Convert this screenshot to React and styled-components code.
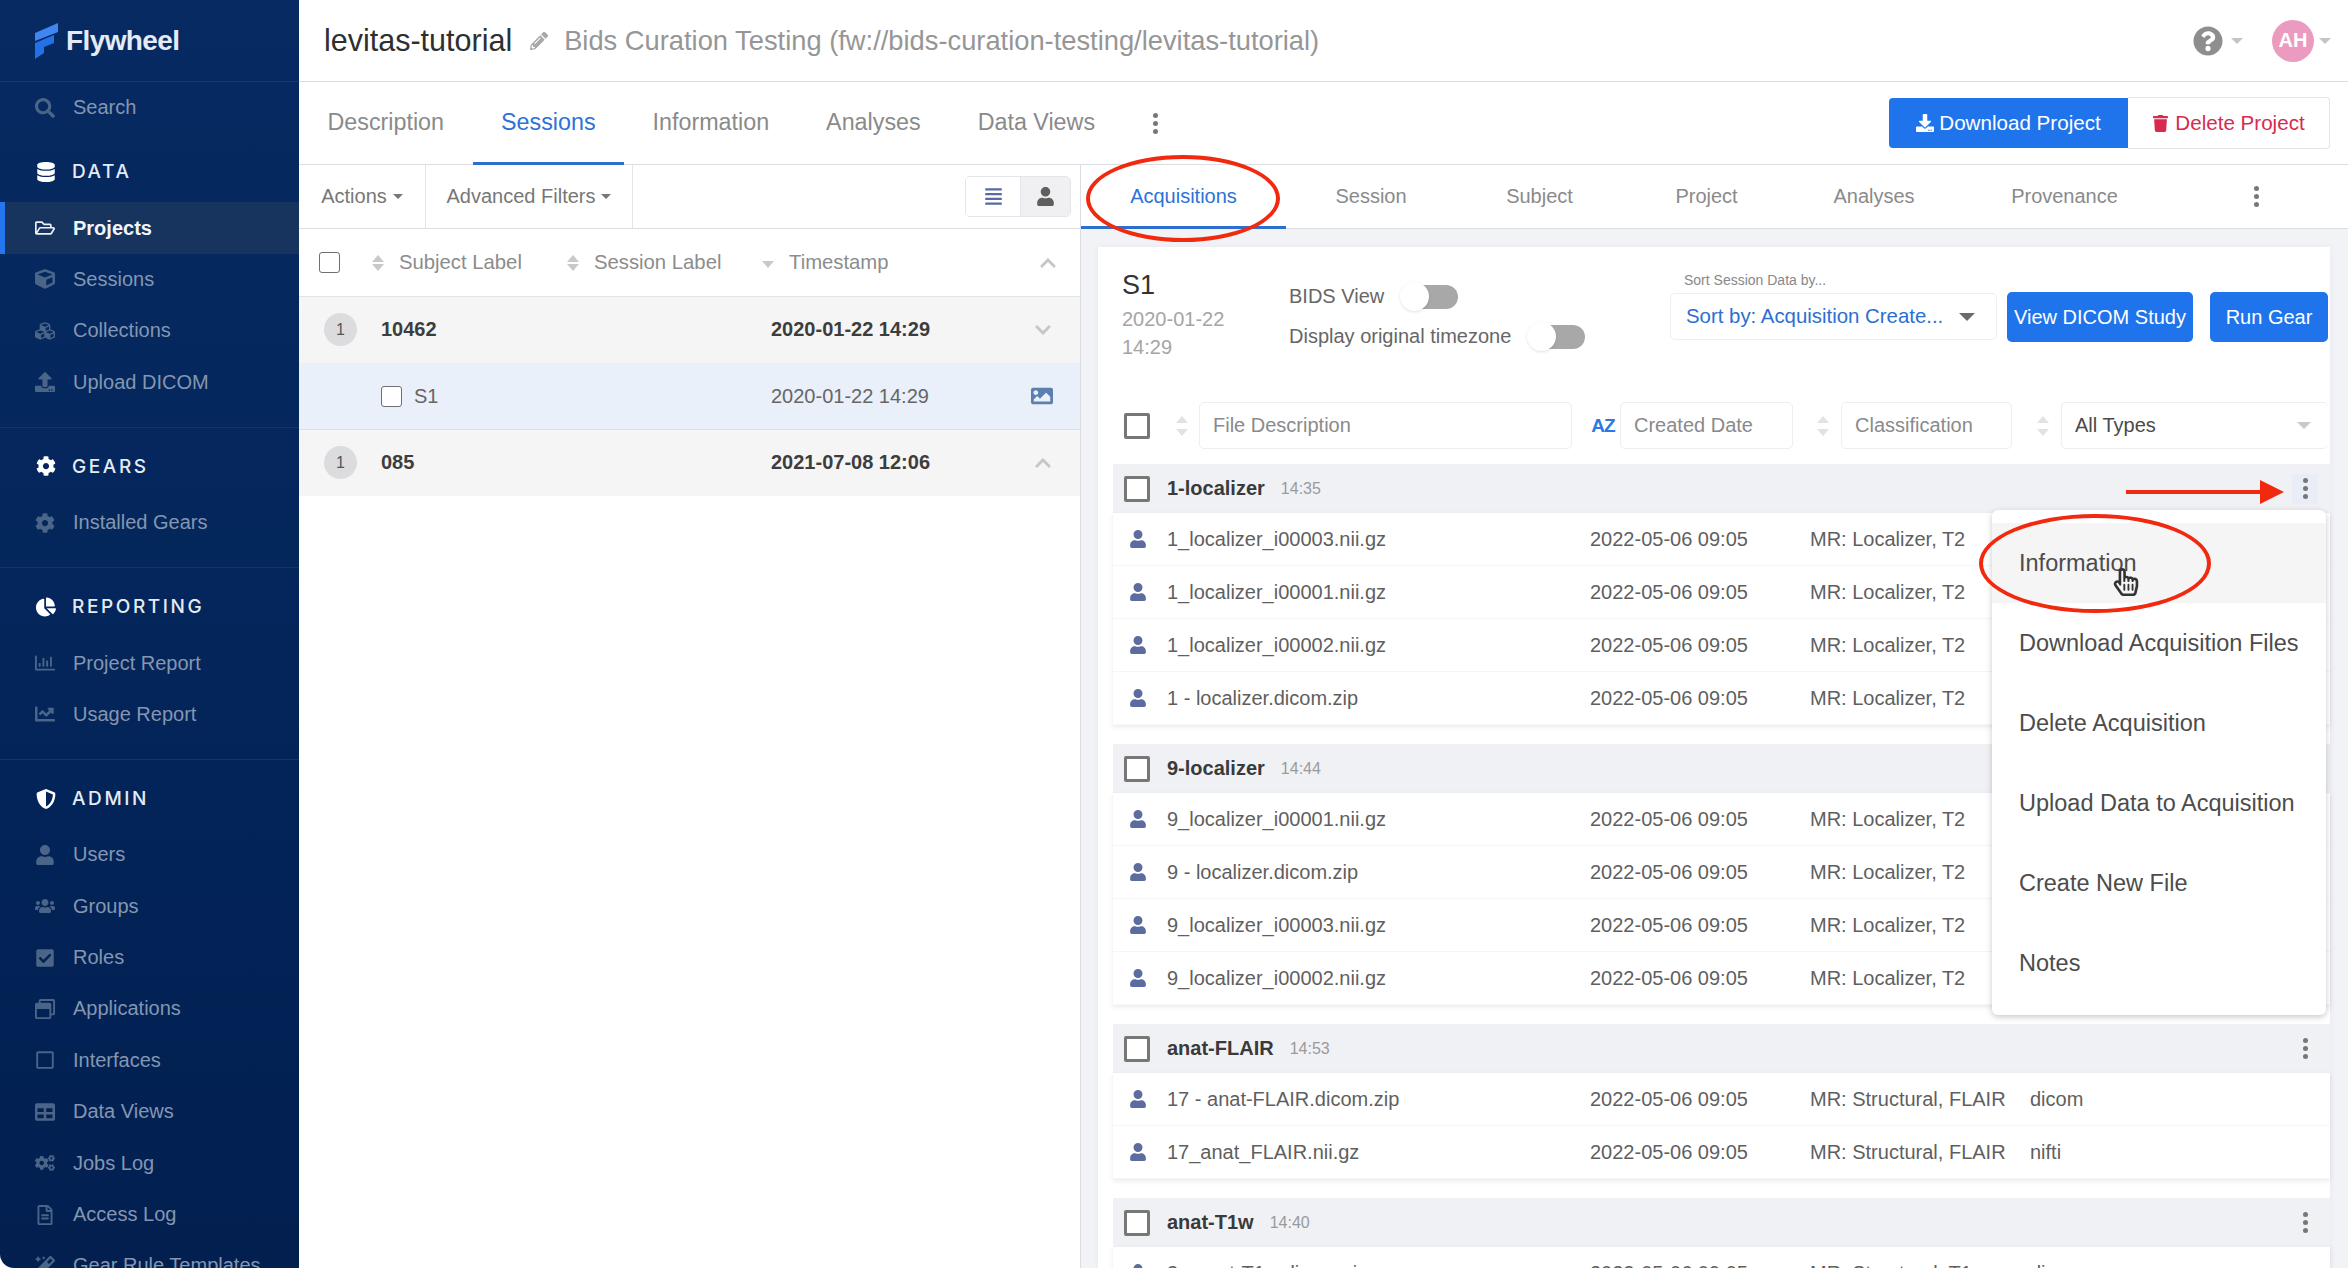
import styled, { createGlobalStyle } from "styled-components";
import {
  FaSearch, FaDatabase, FaRegFolderOpen, FaCube, FaCubes, FaUpload, FaCog, FaChartPie,
  FaShieldAlt, FaUser, FaUsers, FaCheckSquare, FaRegWindowRestore, FaRegSquare, FaTable,
  FaCogs, FaRegFileAlt, FaRegChartBar, FaChartLine, FaMagic, FaPencilAlt, FaDownload,
  FaTrash, FaQuestionCircle, FaImage, FaAlignJustify, FaChevronUp, FaChevronDown, FaRegHandPointer,
} from "react-icons/fa";

const SECTIONS = [
  {
    title: "DATA", icon: <FaDatabase />,
    items: [
      { label: "Projects", icon: <FaRegFolderOpen />, active: true },
      { label: "Sessions", icon: <FaCube /> },
      { label: "Collections", icon: <FaCubes /> },
      { label: "Upload DICOM", icon: <FaUpload /> },
    ],
  },
  { title: "GEARS", icon: <FaCog />, items: [{ label: "Installed Gears", icon: <FaCog /> }] },
  {
    title: "REPORTING", icon: <FaChartPie />,
    items: [
      { label: "Project Report", icon: <FaRegChartBar /> },
      { label: "Usage Report", icon: <FaChartLine /> },
    ],
  },
  {
    title: "ADMIN", icon: <FaShieldAlt />,
    items: [
      { label: "Users", icon: <FaUser /> },
      { label: "Groups", icon: <FaUsers /> },
      { label: "Roles", icon: <FaCheckSquare /> },
      { label: "Applications", icon: <FaRegWindowRestore /> },
      { label: "Interfaces", icon: <FaRegSquare /> },
      { label: "Data Views", icon: <FaTable /> },
      { label: "Jobs Log", icon: <FaCogs /> },
      { label: "Access Log", icon: <FaRegFileAlt /> },
      { label: "Gear Rule Templates", icon: <FaMagic /> },
    ],
  },
];

const T2 = "MR: Localizer, T2";
const GROUPS = [
  {
    name: "1-localizer", time: "14:35", active: true,
    files: [
      ["1_localizer_i00003.nii.gz", T2],
      ["1_localizer_i00001.nii.gz", T2],
      ["1_localizer_i00002.nii.gz", T2],
      ["1 - localizer.dicom.zip", T2],
    ],
  },
  {
    name: "9-localizer", time: "14:44",
    files: [
      ["9_localizer_i00001.nii.gz", T2],
      ["9 - localizer.dicom.zip", T2],
      ["9_localizer_i00003.nii.gz", T2],
      ["9_localizer_i00002.nii.gz", T2],
    ],
  },
  {
    name: "anat-FLAIR", time: "14:53",
    files: [
      ["17 - anat-FLAIR.dicom.zip", "MR: Structural, FLAIR", "dicom"],
      ["17_anat_FLAIR.nii.gz", "MR: Structural, FLAIR", "nifti"],
    ],
  },
  {
    name: "anat-T1w", time: "14:40",
    files: [["3 - anat-T1w.dicom.zip", "MR: Structural, T1", "dicom"]],
  },
];

const MENU = ["Information", "Download Acquisition Files", "Delete Acquisition", "Upload Data to Acquisition", "Create New File", "Notes"];

function App() {
  return (
    <>
      <GlobalStyle />
      <Page>
        <Sidebar>
          <Logo>
            <svg width="26" height="36" viewBox="0 0 26 36">
              <path d="M2 10 L25 0 V9 L2 18 Z" fill="#3f86f0" />
              <path d="M2 20 L21 12 V20 L11 24 V30 L2 36 Z" fill="#2470e6" />
            </svg>
            <LogoText>Flywheel</LogoText>
          </Logo>
          <NavRow>
            <NavIcon><FaSearch /></NavIcon>
            Search
          </NavRow>
          {SECTIONS.map((section, i) => (
            <Section key={section.title} $first={i === 0}>
              <SectionHead>
                <SectionIcon>{section.icon}</SectionIcon>
                {section.title}
              </SectionHead>
              {section.items.map((item) => (
                <NavRow key={item.label} $active={item.active}>
                  <NavIcon $active={item.active}>{item.icon}</NavIcon>
                  {item.label}
                </NavRow>
              ))}
            </Section>
          ))}
        </Sidebar>

        <Content>
          <Header>
            <Title>levitas-tutorial</Title>
            <Pencil><FaPencilAlt /></Pencil>
            <Subtitle>Bids Curation Testing (fw://bids-curation-testing/levitas-tutorial)</Subtitle>
            <HeaderRight>
              <HelpIcon><FaQuestionCircle /></HelpIcon>
              <Caret $size={6} $color="#c4c4c4" />
              <Avatar>AH</Avatar>
              <Caret $size={6} $color="#c4c4c4" />
            </HeaderRight>
          </Header>

          <MainTabs>
            <MainTab>Description</MainTab>
            <MainTab $active>Sessions</MainTab>
            <MainTab>Information</MainTab>
            <MainTab>Analyses</MainTab>
            <MainTab>Data Views</MainTab>
            <TabDots><Dots /></TabDots>
            <ActionGroup>
              <DownloadButton><FaDownload /> Download Project</DownloadButton>
              <DeleteButton><FaTrash /> Delete Project</DeleteButton>
            </ActionGroup>
          </MainTabs>

          <Body>
            <LeftPanel>
              <Toolbar>
                <ToolItem $width={127}>Actions <Caret $size={5} $color="#777" /></ToolItem>
                <ToolItem $width={207}>Advanced Filters <Caret $size={5} $color="#777" /></ToolItem>
                <ViewToggle>
                  <ViewButton><FaAlignJustify /></ViewButton>
                  <ViewButton $on><FaUser /></ViewButton>
                </ViewToggle>
              </Toolbar>
              <TableHead>
                <Check $size={21} $left={20} $right={32} />
                <HeadCell $width={195}><SortArrows />Subject Label</HeadCell>
                <HeadCell $width={195}><SortArrows />Session Label</HeadCell>
                <HeadCell $width={277}><SmallCaret />Timestamp</HeadCell>
                <ChevronCell><FaChevronUp /></ChevronCell>
              </TableHead>
              <SubjectRow>
                <Cell><CountBadge>1</CountBadge></Cell>
                <strong>10462</strong>
                <strong>2020-01-22 14:29</strong>
                <ChevronCell $pad={3}><FaChevronDown /></ChevronCell>
              </SubjectRow>
              <SessionRow>
                <Cell />
                <SessionLabel><Check $size={21} $right={12} />S1</SessionLabel>
                <span>2020-01-22 14:29</span>
                <ImageCell><FaImage /></ImageCell>
              </SessionRow>
              <SubjectRow>
                <Cell><CountBadge>1</CountBadge></Cell>
                <strong>085</strong>
                <strong>2021-07-08 12:06</strong>
                <ChevronCell $pad={3}><FaChevronUp /></ChevronCell>
              </SubjectRow>
            </LeftPanel>

            <RightPanel>
              <SubTabs>
                <SubTab $width={205} $active>Acquisitions</SubTab>
                <SubTab $width={170}>Session</SubTab>
                <SubTab $width={167}>Subject</SubTab>
                <SubTab $width={167}>Project</SubTab>
                <SubTab $width={168}>Analyses</SubTab>
                <SubTab $width={213}>Provenance</SubTab>
                <SubTabDots><Dots /></SubTabDots>
              </SubTabs>
              <CardArea>
                <Card>
                  <CardHead>
                    <SessionInfo>
                      <SessionName>S1</SessionName>
                      <SessionDate>2020-01-22<br />14:29</SessionDate>
                    </SessionInfo>
                    <ToggleColumn>
                      <ToggleRow>BIDS View <Switch /></ToggleRow>
                      <ToggleRow>Display original timezone <Switch /></ToggleRow>
                    </ToggleColumn>
                    <SortColumn>
                      <SortCaption>Sort Session Data by...</SortCaption>
                      <SortSelect>
                        Sort by: Acquisition Create...
                        <Caret $size={8} $color="#6b6b6b" />
                      </SortSelect>
                    </SortColumn>
                    <BlueButton $width={186} $left={10}>View DICOM Study</BlueButton>
                    <BlueButton $width={118} $left={17}>Run Gear</BlueButton>
                  </CardHead>

                  <FilterRow>
                    <Check $size={26} $heavy $right={15} />
                    <SortSlot $width={34} $pad={0}><PaleSort /></SortSlot>
                    <FilterInput $width={373}>File Description</FilterInput>
                    <SortSlot $width={48} $pad={14}><AzMark>AZ</AzMark></SortSlot>
                    <FilterInput $width={173}>Created Date</FilterInput>
                    <SortSlot $width={48} $pad={12}><PaleSort /></SortSlot>
                    <FilterInput $width={171}>Classification</FilterInput>
                    <SortSlot $width={49} $pad={12}><PaleSort /></SortSlot>
                    <TypeSelect>All Types <Caret $size={7} $color="#c9c9c9" /></TypeSelect>
                  </FilterRow>

                  {GROUPS.map((group) => (
                    <Group key={group.name}>
                      <GroupHead>
                        <Check $size={26} $heavy $right={17} />
                        <GroupName>{group.name}</GroupName>
                        <GroupTime>{group.time}</GroupTime>
                        <GroupDots $active={group.active}><Dots /></GroupDots>
                      </GroupHead>
                      <FileList>
                        {group.files.map(([name, cls, type]) => (
                          <FileRow key={name}>
                            <FileIcon><FaUser /></FileIcon>
                            <span>{name}</span>
                            <span>2022-05-06 09:05</span>
                            <span>{cls}</span>
                            <span>{type}</span>
                          </FileRow>
                        ))}
                      </FileList>
                    </Group>
                  ))}
                </Card>
              </CardArea>
            </RightPanel>
          </Body>
        </Content>

        <Menu>
          {MENU.map((item, i) => (
            <MenuItem key={item} $hover={i === 0}>{item}</MenuItem>
          ))}
        </Menu>
        <HandCursor><FaRegHandPointer /></HandCursor>
        <Annotation $left={1086} $top={155} $width={194} $height={87} />
        <Annotation $left={1979} $top={514} $width={232} $height={99} />
        <Arrow width="160" height="26" viewBox="0 0 160 26">
          <rect x="0" y="11" width="136" height="4" fill="#f0290f" />
          <path d="M134 1 L158 13 L134 25 Z" fill="#f0290f" />
        </Arrow>
      </Page>
    </>
  );
}

export default App;

function Dots() {
  return (
    <DotStack>
      <i />
      <i />
      <i />
    </DotStack>
  );
}

function SortArrows() {
  return (
    <ArrowStack $color="#c9c9c9">
      <ArrowUp />
      <ArrowDown />
    </ArrowStack>
  );
}

function PaleSort() {
  return (
    <ArrowStack $color="#e2e2e2" $gap={6}>
      <ArrowUp />
      <ArrowDown />
    </ArrowStack>
  );
}

const GlobalStyle = createGlobalStyle`
  html, body {
    margin: 0;
    padding: 0;
    background: #fff;
  }
  * { box-sizing: border-box; }
  body {
    font-family: "Liberation Sans", Arial, sans-serif;
    color: #555;
    overflow: hidden;
  }
`;

const Page = styled.div`
  position: relative;
  display: flex;
  width: 2348px;
  height: 1268px;
  overflow: hidden;
  background: #fff;
`;

const Sidebar = styled.aside`
  flex: 0 0 299px;
  height: 1268px;
  overflow: hidden;
  background: linear-gradient(180deg, #062a61 0%, #03255a 55%, #021f50 100%);
  border-bottom-left-radius: 14px;
  color: #8496b0;
  font-size: 20px;
`;

const Logo = styled.div`
  display: flex;
  align-items: center;
  gap: 7px;
  height: 82px;
  padding-left: 33px;
  border-bottom: 1px solid #17396c;
`;

const LogoText = styled.span`
  font-size: 28px;
  font-weight: 700;
  letter-spacing: -0.6px;
  color: #e4ebf5;
`;

const Section = styled.section`
  padding: 13px 0 19px;
  border-top: ${(p) => (p.$first ? "none" : "1px solid #123466")};
  &:last-child { padding-bottom: 0; }
`;

const SectionHead = styled.div`
  display: flex;
  align-items: center;
  height: 51px;
  margin-bottom: 5px;
  font-family: Inter, "Liberation Sans", sans-serif;
  font-size: 19px;
  font-weight: 500;
  letter-spacing: 2.6px;
  color: #e6ebf3;
`;

const SectionIcon = styled.span`
  display: flex;
  justify-content: center;
  width: 72px;
  padding-left: 20px;
  font-size: 20px;
  color: #fff;
`;

const NavRow = styled.div`
  display: flex;
  align-items: center;
  height: 51.4px;
  border-left: 5px solid ${(p) => (p.$active ? "#2376ee" : "transparent")};
  background: ${(p) => (p.$active ? "#17345f" : "transparent")};
  color: ${(p) => (p.$active ? "#f2f5f9" : "#8496b0")};
  font-weight: ${(p) => (p.$active ? 700 : 400)};
`;

const NavIcon = styled.span`
  display: flex;
  justify-content: center;
  width: 68px;
  padding-left: 16px;
  padding-right: 4px;
  font-size: 20px;
  color: ${(p) => (p.$active ? "#eef2f7" : "#4b6588")};
`;

const Content = styled.div`
  flex: 1;
  min-width: 0;
  display: flex;
  flex-direction: column;
`;

const Header = styled.header`
  display: flex;
  align-items: center;
  flex: 0 0 82px;
  padding: 0 17px 0 25px;
  border-bottom: 1px solid #dcdde2;
`;

const Title = styled.h1`
  margin: 0;
  font-size: 30.5px;
  font-weight: 400;
  color: #2f2f2f;
`;

const Pencil = styled.span`
  display: flex;
  margin: 0 16px 0 18px;
  font-size: 18px;
  color: #a8a8a8;
`;

const Subtitle = styled.span`
  font-size: 27.3px;
  color: #969696;
`;

const HeaderRight = styled.div`
  display: flex;
  align-items: center;
  margin-left: auto;
`;

const HelpIcon = styled.span`
  display: flex;
  margin-right: 8px;
  font-size: 30px;
  color: #8e8e8e;
`;

const Avatar = styled.div`
  display: flex;
  align-items: center;
  justify-content: center;
  width: 42px;
  height: 42px;
  margin: 0 5px 0 29px;
  border-radius: 50%;
  background: #ec9bc0;
  color: #fff;
  font-size: 20px;
  font-weight: 700;
`;

const Caret = styled.span`
  display: inline-block;
  width: 0;
  height: 0;
  border-left: ${(p) => p.$size}px solid transparent;
  border-right: ${(p) => p.$size}px solid transparent;
  border-top: ${(p) => p.$size}px solid ${(p) => p.$color};
`;

const MainTabs = styled.nav`
  display: flex;
  align-items: stretch;
  flex: 0 0 83px;
  border-bottom: 1px solid #dcdde2;
`;

const MainTab = styled.div`
  display: flex;
  align-items: center;
  padding: 0 28.5px;
  margin-bottom: -1px;
  font-size: 23.3px;
  color: ${(p) => (p.$active ? "#2c72d8" : "#8a8a8a")};
  border-bottom: 3px solid ${(p) => (p.$active ? "#2c6fd1" : "transparent")};
`;

const TabDots = styled.div`
  display: flex;
  align-items: center;
  padding-left: 29px;
`;

const DotStack = styled.span`
  display: inline-flex;
  flex-direction: column;
  gap: 3px;
  i {
    display: block;
    width: 5px;
    height: 5px;
    border-radius: 50%;
    background: #777;
  }
`;

const ActionGroup = styled.div`
  display: flex;
  align-items: center;
  margin-left: auto;
  padding-right: 18px;
`;

const DownloadButton = styled.button`
  display: flex;
  align-items: center;
  justify-content: center;
  gap: 5px;
  width: 239px;
  height: 50px;
  border: 0;
  border-radius: 4px 0 0 4px;
  background: #1f74ec;
  color: #fff;
  font: 20.6px "Liberation Sans", sans-serif;
  svg { font-size: 18px; }
`;

const DeleteButton = styled.button`
  display: flex;
  align-items: center;
  justify-content: center;
  gap: 6px;
  width: 202px;
  height: 52px;
  border: 1px solid #e4e4e8;
  border-left: 0;
  border-radius: 0 4px 4px 0;
  background: #fff;
  color: #d9294f;
  font: 20.6px "Liberation Sans", sans-serif;
  svg { font-size: 17px; }
`;

const Body = styled.div`
  flex: 1;
  min-height: 0;
  display: flex;
`;

const LeftPanel = styled.div`
  flex: 0 0 782px;
  border-right: 1px solid #dcdde2;
  font-size: 20px;
`;

const Toolbar = styled.div`
  display: flex;
  align-items: center;
  height: 64px;
  border-bottom: 1px solid #dcdde2;
`;

const ToolItem = styled.div`
  display: flex;
  align-items: center;
  justify-content: center;
  gap: 6px;
  width: ${(p) => p.$width}px;
  height: 100%;
  border-right: 1px solid #e3e4e8;
  color: #777;
`;

const ViewToggle = styled.div`
  display: flex;
  margin-left: auto;
  margin-right: 9px;
  height: 41px;
  border: 1px solid #e4e5ea;
  border-radius: 5px;
  overflow: hidden;
`;

const ViewButton = styled.div`
  display: flex;
  align-items: center;
  justify-content: center;
  width: ${(p) => (p.$on ? 50 : 54)}px;
  font-size: 19px;
  background: ${(p) => (p.$on ? "#f0f0f2" : "#fff")};
  color: ${(p) => (p.$on ? "#5f5f5f" : "#5a6aa0")};
  border-left: ${(p) => (p.$on ? "1px solid #e4e5ea" : "none")};
`;

const TableHead = styled.div`
  display: flex;
  align-items: center;
  height: 68px;
  border-bottom: 1px solid #e2e3e6;
  font-size: 20.3px;
  color: #8c8c8c;
`;

const Check = styled.span`
  flex: none;
  display: inline-block;
  width: ${(p) => p.$size}px;
  height: ${(p) => p.$size}px;
  margin-left: ${(p) => p.$left || 0}px;
  margin-right: ${(p) => p.$right || 0}px;
  border: ${(p) => (p.$heavy ? "3px solid #777" : "1.5px solid #6f6f6f")};
  border-radius: ${(p) => (p.$heavy ? 2 : 3)}px;
  background: #fff;
`;

const HeadCell = styled.div`
  display: flex;
  align-items: center;
  gap: 15px;
  width: ${(p) => p.$width}px;
`;

const ArrowStack = styled.span`
  display: inline-flex;
  flex-direction: column;
  gap: ${(p) => p.$gap || 2}px;
  color: ${(p) => p.$color};
`;

const ArrowUp = styled.i`
  display: block;
  width: 0;
  height: 0;
  border-left: 6px solid transparent;
  border-right: 6px solid transparent;
  border-bottom: 7px solid currentColor;
`;

const ArrowDown = styled.i`
  display: block;
  width: 0;
  height: 0;
  border-left: 6px solid transparent;
  border-right: 6px solid transparent;
  border-top: 7px solid currentColor;
`;

const SmallCaret = styled(ArrowDown)`
  color: #c9c9c9;
  margin-top: 4px;
`;

const ChevronCell = styled.span`
  display: flex;
  padding-left: ${(p) => p.$pad || 0}px;
  font-size: 18px;
  color: #c6c6c6;
`;

const RowGrid = styled.div`
  display: grid;
  grid-template-columns: 82px 390px 260px 1fr;
  align-items: center;
`;

const SubjectRow = styled(RowGrid)`
  height: 66px;
  background: #f5f5f6;
  border-bottom: 1px solid #f5f5f6;
  color: #3d3d3d;
  strong { font-weight: 700; }
`;

const SessionRow = styled(RowGrid)`
  height: 67px;
  background: #e9f0fa;
  border-bottom: 1px solid #dfe1e6;
  color: #666;
`;

const Cell = styled.div`
  padding-left: 25px;
`;

const CountBadge = styled.span`
  display: flex;
  align-items: center;
  justify-content: center;
  width: 33px;
  height: 33px;
  border-radius: 50%;
  background: #dcdcdf;
  color: #555;
  font-size: 16px;
`;

const SessionLabel = styled.div`
  display: flex;
  align-items: center;
  color: #666;
`;

const ImageCell = styled.span`
  display: flex;
  font-size: 22px;
  color: #5a7fb0;
`;

const RightPanel = styled.div`
  flex: 1;
  min-width: 0;
  display: flex;
  flex-direction: column;
`;

const SubTabs = styled.nav`
  display: flex;
  flex: 0 0 64px;
  border-bottom: 1px solid #dcdde2;
`;

const SubTab = styled.div`
  display: flex;
  align-items: center;
  justify-content: center;
  width: ${(p) => p.$width}px;
  margin-bottom: -1px;
  padding-top: 2px;
  font-size: 20px;
  color: ${(p) => (p.$active ? "#2c72d8" : "#8a8a8a")};
  border-bottom: 3px solid ${(p) => (p.$active ? "#2c6fd1" : "transparent")};
`;

const SubTabDots = styled.div`
  display: flex;
  align-items: center;
  padding-left: 83px;
`;

const CardArea = styled.div`
  flex: 1;
  min-height: 0;
  padding: 18px 18px 0 17px;
  background: #f2f3f7;
`;

const Card = styled.div`
  height: 100%;
  padding-left: 15px;
  background: #fff;
  box-shadow: 0 0 6px rgba(60, 60, 90, 0.06);
`;

const CardHead = styled.div`
  display: flex;
  align-items: flex-start;
  height: 155px;
  margin-left: -15px;
  padding: 23px 0 0 24px;
`;

const SessionInfo = styled.div`
  flex: 0 0 167px;
`;

const SessionName = styled.div`
  font-size: 27px;
  line-height: 30px;
  color: #333;
`;

const SessionDate = styled.div`
  margin-top: 5px;
  font-size: 20px;
  line-height: 28px;
  color: #a5a5a5;
`;

const ToggleColumn = styled.div`
  flex: 0 0 381px;
  margin-top: 6px;
`;

const ToggleRow = styled.div`
  display: flex;
  align-items: center;
  gap: 15px;
  height: 40px;
  font-size: 20px;
  color: #666;
`;

const Switch = styled.span`
  position: relative;
  display: inline-block;
  width: 50px;
  height: 24px;
  margin-left: 9px;
  margin-top: 2px;
  border-radius: 12px;
  background: #a8a8a8;
  &::before {
    content: "";
    position: absolute;
    left: -8px;
    top: -3px;
    width: 29px;
    height: 29px;
    border-radius: 50%;
    background: #fff;
    box-shadow: 0 1px 3px rgba(0, 0, 0, 0.12);
  }
`;

const SortColumn = styled.div`
  flex: 0 0 327px;
  margin-top: 2px;
`;

const SortCaption = styled.div`
  height: 16px;
  margin-left: 14px;
  font-size: 14px;
  line-height: 16px;
  color: #888;
`;

const SortSelect = styled.div`
  display: flex;
  align-items: center;
  justify-content: space-between;
  height: 47px;
  margin-top: 5px;
  padding: 0 21px 0 15px;
  border: 1px solid #eceef1;
  border-radius: 5px;
  font-size: 20.4px;
  color: #2c6fd1;
`;

const BlueButton = styled.button`
  flex: none;
  width: ${(p) => p.$width}px;
  height: 50px;
  margin-top: 22px;
  margin-left: ${(p) => p.$left}px;
  padding: 0;
  border: 0;
  border-radius: 5px;
  background: #1f74ec;
  color: #fff;
  font: 20px "Liberation Sans", sans-serif;
`;

const FilterRow = styled.div`
  display: flex;
  align-items: center;
  height: 47px;
  margin: 0 2px 15px -15px;
  padding-left: 26px;
`;

const SortSlot = styled.div`
  flex: none;
  display: flex;
  justify-content: center;
  width: ${(p) => p.$width}px;
  padding-left: ${(p) => p.$pad}px;
`;

const FilterInput = styled.div`
  flex: none;
  display: flex;
  align-items: center;
  width: ${(p) => p.$width}px;
  height: 47px;
  padding-left: 13px;
  border: 1px solid #eceef1;
  border-radius: 5px;
  font-size: 20px;
  color: #8a8a8a;
`;

const AzMark = styled.span`
  font-size: 19px;
  font-weight: 700;
  letter-spacing: -1px;
  color: #2c78e4;
`;

const TypeSelect = styled(FilterInput)`
  flex: 1;
  justify-content: space-between;
  padding-right: 17px;
  border-right: 0;
  color: #4a4a4a;
`;

const Group = styled.div`
  margin-bottom: 19px;
`;

const GroupHead = styled.div`
  display: flex;
  align-items: center;
  height: 49px;
  padding: 0 20px 0 11px;
  background: #f0f1f5;
`;

const GroupName = styled.span`
  font-size: 20px;
  font-weight: 700;
  color: #3a3a3a;
`;

const GroupTime = styled.span`
  margin-left: 16px;
  font-size: 16px;
  color: #9a9a9a;
`;

const GroupDots = styled.span`
  display: flex;
  align-items: center;
  justify-content: center;
  width: 26px;
  height: 30px;
  margin-left: auto;
  margin-right: -8px;
  background: ${(p) => (p.$active ? "#e9edf7" : "transparent")};
`;

const FileList = styled.div`
  background: #fff;
  box-shadow: 0 2px 5px rgba(60, 60, 90, 0.1);
`;

const FileRow = styled.div`
  display: grid;
  grid-template-columns: 54px 423px 220px 220px 1fr;
  align-items: center;
  height: 53px;
  border-bottom: 1px solid #f6f6f8;
  font-size: 20px;
  color: #5f5f5f;
`;

const FileIcon = styled.span`
  display: flex;
  justify-content: center;
  padding-right: 5px;
  font-size: 18px;
  color: #5d6c9f;
`;

const Menu = styled.div`
  position: absolute;
  left: 1992px;
  top: 510px;
  width: 334px;
  height: 505px;
  padding-top: 13px;
  border-radius: 6px;
  background: #fff;
  box-shadow: 0 2px 6px rgba(0, 0, 0, 0.22);
`;

const MenuItem = styled.div`
  display: flex;
  align-items: center;
  height: 80px;
  padding-left: 27px;
  font-size: 23.5px;
  color: #4c4c4c;
  background: ${(p) => (p.$hover ? "#f5f5f6" : "#fff")};
`;

const HandCursor = styled.span`
  position: absolute;
  left: 2112px;
  top: 568px;
  display: flex;
  font-size: 28px;
  color: #333;
`;

const Annotation = styled.div`
  position: absolute;
  left: ${(p) => p.$left}px;
  top: ${(p) => p.$top}px;
  width: ${(p) => p.$width}px;
  height: ${(p) => p.$height}px;
  border: 4px solid #f0290f;
  border-radius: 50%;
`;

const Arrow = styled.svg`
  position: absolute;
  left: 2126px;
  top: 479px;
`;
